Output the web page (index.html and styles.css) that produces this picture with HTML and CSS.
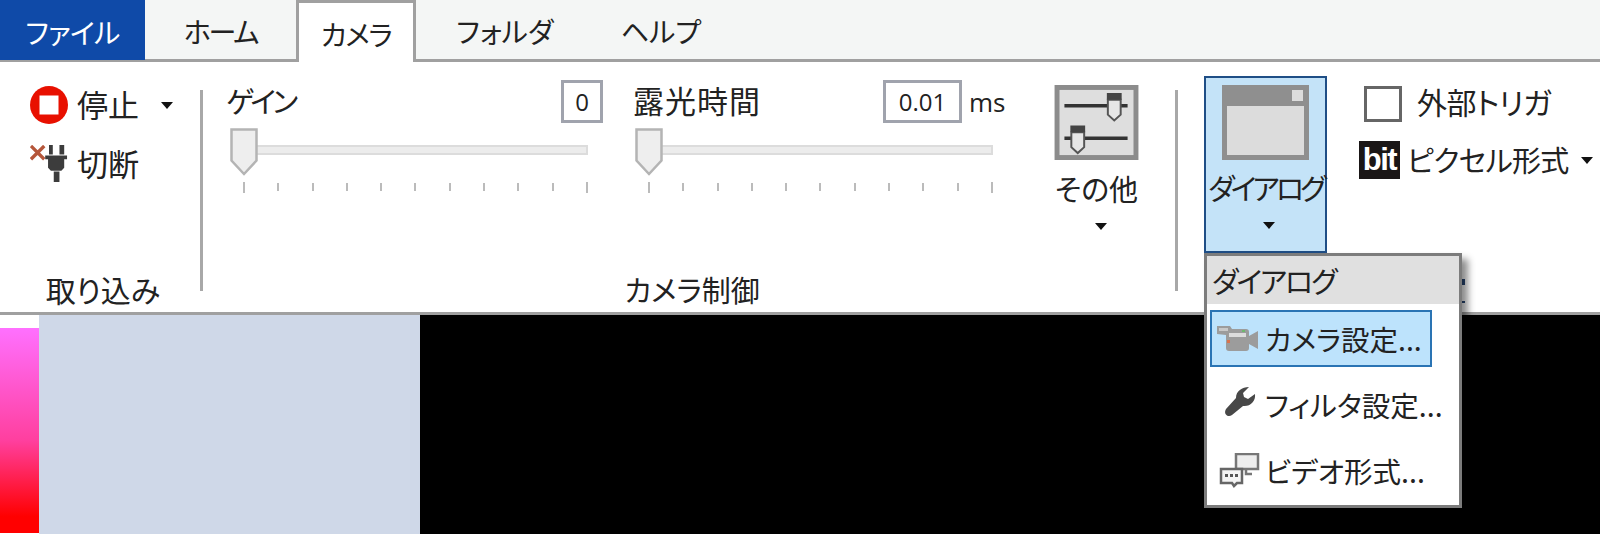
FILE: index.html
```html
<!DOCTYPE html>
<html lang="ja">
  <head>
    <meta charset="UTF-8" />
    <meta name="viewport" content="width=device-width, initial-scale=1.0" />
    <title>カメラ</title>
    <link rel="stylesheet" href="styles.css">
  </head>
  <body>
    <div id="app">
      <div class="tabs">
        <div class="tab file">ファイル</div>
        <div class="tab home">ホーム</div>
        <div class="tab active">カメラ</div>
        <div class="tab folder">フォルダ</div>
        <div class="tab help">ヘルプ</div>
      </div>

      <div class="ribbon">
        <div class="group capture">
          <div class="tool-row stop-row">
            <svg class="tool-icon" viewBox="0 0 38 38">
              <circle cx="19" cy="19" r="19" fill="#e81000" />
              <rect x="9.5" y="9.5" width="19" height="19" fill="#fff" />
            </svg>
            <span class="tool-text">停止</span>
            <span class="caret stop-caret"></span>
          </div>
          <div class="tool-row cut-row">
            <svg class="tool-icon" viewBox="0 0 40 40">
              <path d="M1 1 L15 15 M15 1 L1 15" stroke="#b5563a" stroke-width="3.5" fill="none" />
              <path d="M20 0h4v10h-4z M31 0h5v10h-5z M16 11h23v4h-3v9l-3 3H22l-3-3v-9h-3z M25 28h6v11h-6z" fill="#3c3c3c" />
            </svg>
            <span class="tool-text">切断</span>
          </div>
          <div class="group-label">取り込み</div>
        </div>
        <div class="sep"></div>

        <div class="group control">
          <div class="control-row">
            <div class="slider-block gain">
              <div class="slider-head">
                <span class="slider-label">ゲイン</span>
                <span class="num-box gain-box">0</span>
              </div>
              <div class="slider">
                <div class="track"></div>
                <svg class="thumb" viewBox="0 0 28 48">
                  <path d="M1.5 1.5h25v31L14 46 1.5 32.5z" fill="#eee" stroke="#b4b4b4" stroke-width="2.5" />
                </svg>
                <div class="ticks">
                  <i class="long"></i><i></i><i></i><i></i><i></i><i></i><i></i><i></i><i></i><i></i><i class="long"></i>
                </div>
              </div>
            </div>
            <div class="slider-block exposure">
              <div class="slider-head">
                <span class="slider-label">露光時間</span>
                <span class="num-box time-box">0.01</span>
                <span class="unit">ms</span>
              </div>
              <div class="slider">
                <div class="track"></div>
                <svg class="thumb" viewBox="0 0 28 48">
                  <path d="M1.5 1.5h25v31L14 46 1.5 32.5z" fill="#eee" stroke="#b4b4b4" stroke-width="2.5" />
                </svg>
                <div class="ticks">
                  <i class="long"></i><i></i><i></i><i></i><i></i><i></i><i></i><i></i><i></i><i></i><i class="long"></i>
                </div>
              </div>
            </div>
            <div class="big-btn more">
              <svg class="big-icon" viewBox="0 0 85 76">
                <rect width="85" height="76" fill="#8c8c8c" />
                <rect x="5" y="5" width="75" height="66" fill="#dedede" />
                <path d="M10 21h64 M10 54h64" stroke="#333" stroke-width="3.5" />
                <path d="M54 15h13v15l-6.500 6-6.500-6z M17 48h13v15l-6.500 6-6.500-6z" fill="#e6e6e6" stroke="#555" stroke-width="2" />
                <path d="M53 8h15v7H53z M16 41h15v7H16z" fill="#444" />
              </svg>
              <span class="big-text">その他</span>
              <span class="caret"></span>
            </div>
          </div>
          <div class="group-label">カメラ制御</div>
        </div>
        <div class="sep"></div>

        <div class="group device">
          <div class="dialog-wrap">
            <div class="big-btn dialog">
              <svg class="big-icon" viewBox="0 0 87 75">
                <rect width="87" height="75" fill="#8f8f8f" />
                <rect x="5" y="21" width="77" height="49" fill="#dcdcdc" />
                <rect x="70" y="5" width="11" height="11" fill="#dcdcdc" />
              </svg>
              <span class="big-text">ダイアログ</span>
              <span class="caret"></span>
            </div>
            <i class="peek peek-top"></i>
            <i class="peek peek-low"></i>
            <div class="menu">
              <div class="menu-head">ダイアログ</div>
              <div class="menu-item selected">
                <svg class="menu-icon" viewBox="0 0 44 36">
                  <path d="M1 5h13l2 3h14a3 3 0 0 1 3 3v4l9-5v18l-9-5v4a3 3 0 0 1-3 3H13a3 3 0 0 1-3-3V14L1 13z" fill="#9c9c9c" />
                  <rect x="13" y="12" width="17" height="4" fill="#dcdcdc" />
                  <rect x="3" y="7" width="9" height="3" fill="#c8c8c8" />
                  <rect x="26" y="9" width="3" height="2" fill="#6fb86f" />
                  <rect x="11" y="19" width="3" height="3" fill="#d8734f" />
                </svg>
                <span>カメラ設定...</span>
              </div>
              <div class="menu-item">
                <svg class="menu-icon" viewBox="0 0 44 36">
                  <path d="M33 0 L27 6 L28 10 L32 12 L39 7 C40 14 34 20 27 19 L16 28 C12 31 7 27 10 22 L20 11 C20 4 26 0 33 0z" fill="#484848" />
                </svg>
                <span>フィルタ設定...</span>
              </div>
              <div class="menu-item">
                <svg class="menu-icon" viewBox="0 0 44 36">
                  <rect x="20" y="1" width="22" height="15" fill="#eee" stroke="#777" stroke-width="2.5" />
                  <path d="M30 16v5h6" fill="none" stroke="#777" stroke-width="2.5" />
                  <path d="M5 16h21v14h-5l-3 3-2-3H5z" fill="#f4f4f4" stroke="#666" stroke-width="2.5" />
                  <path d="M9 21h3v3H9zM14 21h3v3h-3zM19 21h3v3h-3z" fill="#555" />
                </svg>
                <span>ビデオ形式...</span>
              </div>
            </div>
          </div>
          <div class="side-col">
            <div class="check-row">
              <span class="check"></span>
              <span class="tool-text check-text">外部トリガ</span>
            </div>
            <div class="bit-row">
              <span class="bit">bit</span>
              <span class="tool-text format-text">ピクセル形式</span>
              <span class="caret"></span>
            </div>
          </div>
        </div>
      </div>

      <div class="view">
        <div class="legend"><div class="legend-bar"></div></div>
        <div class="panel"></div>
        <div class="screen"></div>
      </div>
    </div>
  </body>
</html>
```

FILE: styles.css
```css
html,
body {
  margin: 0;
  background-color: white;
}
#app {
  width: 1600px;
  height: 537px;
  overflow: hidden;
  font-family: "Noto Sans CJK JP", "Noto Sans", sans-serif;
  font-feature-settings: "palt";
  font-size: 29px;
  color: #222;
  display: flex;
  flex-direction: column;
}

/* tabs */
.tabs {
  height: 62px;
  box-sizing: border-box;
  display: flex;
  background-color: #f4f6f5;
  border-bottom: 3px solid #a0a0a0;
}
.tab {
  display: flex;
  justify-content: center;
  align-items: center;
  font-size: 28px;
  padding-top: 3px;
  box-sizing: border-box;
}
.file {
  width: 145px;
  background-color: #0f4aa8;
  color: white;
  height: 60px;
  letter-spacing: -0.7px;
}
.home {
  width: 151px;
  letter-spacing: -2.3px;
}
.active {
  width: 120px;
  height: 62px;
  background-color: white;
  border: 3px solid #a0a0a0;
  border-bottom: none;
  letter-spacing: -1.3px;
}
.folder {
  width: 178px;
}
.help {
  width: 134px;
}

/* ribbon */
.ribbon {
  height: 253px;
  box-sizing: border-box;
  display: flex;
  border-bottom: 3px solid #a0a0a0;
}
.group {
  display: flex;
  flex-direction: column;
}
.sep {
  width: 3px;
  height: 201px;
  margin-top: 28px;
  background-color: #a8a8a8;
}
.group-label {
  margin-top: auto;
  margin-bottom: 5px;
  height: 36px;
  line-height: 36px;
  text-align: center;
}
.caret {
  display: inline-block;
  width: 0;
  height: 0;
  border-left: 6px solid transparent;
  border-right: 6px solid transparent;
  border-top: 7px solid #111;
}

.capture {
  width: 200px;
  box-sizing: border-box;
  padding-top: 24px;
}
.tool-row {
  display: flex;
  align-items: center;
  padding-left: 30px;
  height: 38px;
}
.tool-icon {
  width: 38px;
  height: 38px;
  margin-right: 9px;
}
.tool-text {
  line-height: 38px;
}
.capture .tool-text {
  font-size: 31px;
  margin-bottom: 3px;
}
.stop-caret {
  margin-left: 22px;
}
.cut-row {
  margin-top: 21px;
}
.capture .group-label {
  font-size: 30px;
  padding-left: 6px;
}

.control {
  width: 972px;
}
.control .group-label {
  padding-left: 6px;
}
.control-row {
  display: flex;
  padding-top: 18px;
}
.slider-block {
  display: flex;
  flex-direction: column;
}
.gain {
  width: 377px;
  margin-left: 23px;
  margin-right: 30px;
}
.exposure {
  width: 372px;
  margin-right: 49px;
}
.slider-head {
  height: 43px;
  display: flex;
  align-items: center;
}
.slider-label {
  margin-right: auto;
  margin-bottom: 4px;
}
.gain .slider-label {
  letter-spacing: -3.3px;
}
.exposure .slider-label {
  font-size: 31px;
  letter-spacing: 1px;
}
.num-box {
  box-sizing: border-box;
  height: 43px;
  border: 3px solid #a0a3ad;
  display: flex;
  justify-content: center;
  align-items: center;
  font-family: "Open Sans", sans-serif;
  font-size: 24px;
  background-color: white;
}
.gain-box {
  width: 42px;
}
.time-box {
  width: 79px;
}
.unit {
  font-family: "Open Sans", sans-serif;
  font-size: 26px;
  margin-left: 7px;
  width: 36px;
}
.slider {
  position: relative;
  width: 358px;
  margin-top: 5px;
}
.gain .slider {
  margin-left: 4px;
}
.exposure .slider {
  margin-left: 2px;
}
.track {
  box-sizing: border-box;
  height: 10px;
  margin-top: 17px;
  margin-left: 20px;
  background-color: #ececec;
  border: 2px solid #dcdcdc;
}
.thumb {
  position: absolute;
  left: 0;
  top: 0;
  width: 28px;
  height: 48px;
}
.ticks {
  display: flex;
  justify-content: space-between;
  align-items: center;
  margin: 27px 0 0 13px;
  height: 10px;
}
.ticks i {
  display: block;
  width: 2px;
  height: 8px;
  background-color: #bbb;
}
.ticks .long {
  height: 11px;
}

.big-btn {
  display: flex;
  flex-direction: column;
  align-items: center;
  box-sizing: border-box;
}
.big-icon {
  flex: none;
  width: 85px;
  height: 75px;
}
.big-text {
  margin-top: 7px;
  height: 42px;
  line-height: 42px;
  margin-bottom: 2px;
}
.big-btn .caret {
  margin-top: 12px;
}
.more {
  width: 85px;
  margin-top: 5px;
}
.more .caret {
  margin-left: 8px;
}

.device {
  flex-direction: row;
  padding-left: 26px;
}
.dialog-wrap {
  position: relative;
  margin-top: 14px;
  height: 177px;
}
.dialog {
  width: 123px;
  height: 177px;
  padding-top: 7px;
  background-color: #c4e3f8;
  border: 2px solid #1f4e86;
}
.dialog .big-icon {
  width: 87px;
}
.dialog .big-text {
  margin-top: 6px;
  white-space: nowrap;
  letter-spacing: -3.8px;
}
.dialog .caret {
  margin-left: 6px;
}
.peek {
  position: absolute;
  left: 258px;
  width: 3px;
  background-color: #2b4a78;
}
.peek-top {
  top: 203px;
  height: 6px;
}
.peek-low {
  top: 225px;
  height: 2px;
}
.side-col {
  margin-left: 32px;
  padding-top: 24px;
}
.check-row {
  display: flex;
  align-items: center;
  height: 36px;
  padding-left: 5px;
}
.check {
  box-sizing: border-box;
  width: 38px;
  height: 36px;
  border: 3px solid #666;
  margin-right: 15px;
}
.check-text {
  font-size: 30px;
  margin-bottom: 7px;
  letter-spacing: -0.4px;
}
.bit-row {
  display: flex;
  align-items: center;
  margin-top: 19px;
  height: 38px;
  white-space: nowrap;
}
.bit {
  width: 41px;
  height: 38px;
  background-color: #1a1616;
  color: white;
  font-family: "Liberation Sans", sans-serif;
  font-weight: bold;
  font-size: 31px;
  line-height: 38px;
  letter-spacing: -1.5px;
  text-align: center;
  margin-right: 7px;
}
.format-text {
  margin-bottom: 3px;
  letter-spacing: -0.7px;
}
.bit-row .caret {
  margin-left: 12px;
}

/* dropdown */
.menu {
  position: absolute;
  left: 0;
  top: 100%;
  z-index: 2;
  box-sizing: border-box;
  width: 258px;
  height: 255px;
  background-color: white;
  border: 3px solid #7c7c7c;
  box-shadow: 6px 6px 7px rgba(0, 0, 0, 0.45);
}
.menu-head {
  height: 48px;
  line-height: 48px;
  padding-left: 5px;
  background-color: #e0e0e0;
  letter-spacing: -2px;
}
.menu-item {
  display: flex;
  align-items: center;
  box-sizing: border-box;
  height: 57px;
  width: 222px;
  margin: 9px 0 0 3px;
  padding-left: 6px;
  white-space: nowrap;
  font-size: 28.5px;
}
.menu-item.selected {
  margin-top: 6px;
  background-color: #bde3fc;
  border: 2px solid #2a74b4;
  padding-left: 4px;
}
.menu-icon {
  flex: none;
  width: 44px;
  height: 36px;
  margin-right: 5px;
}

/* bottom view */
.view {
  height: 219px;
  display: flex;
}
.legend {
  width: 39px;
  padding-top: 13px;
  box-sizing: border-box;
}
.legend-bar {
  height: 205px;
  background: linear-gradient(#ff70ff, #ff3f9e 55%, #ff0000 92%);
}
.panel {
  width: 381px;
  background-color: #cfd8e8;
}
.screen {
  flex: 1;
  background-color: black;
}
```
